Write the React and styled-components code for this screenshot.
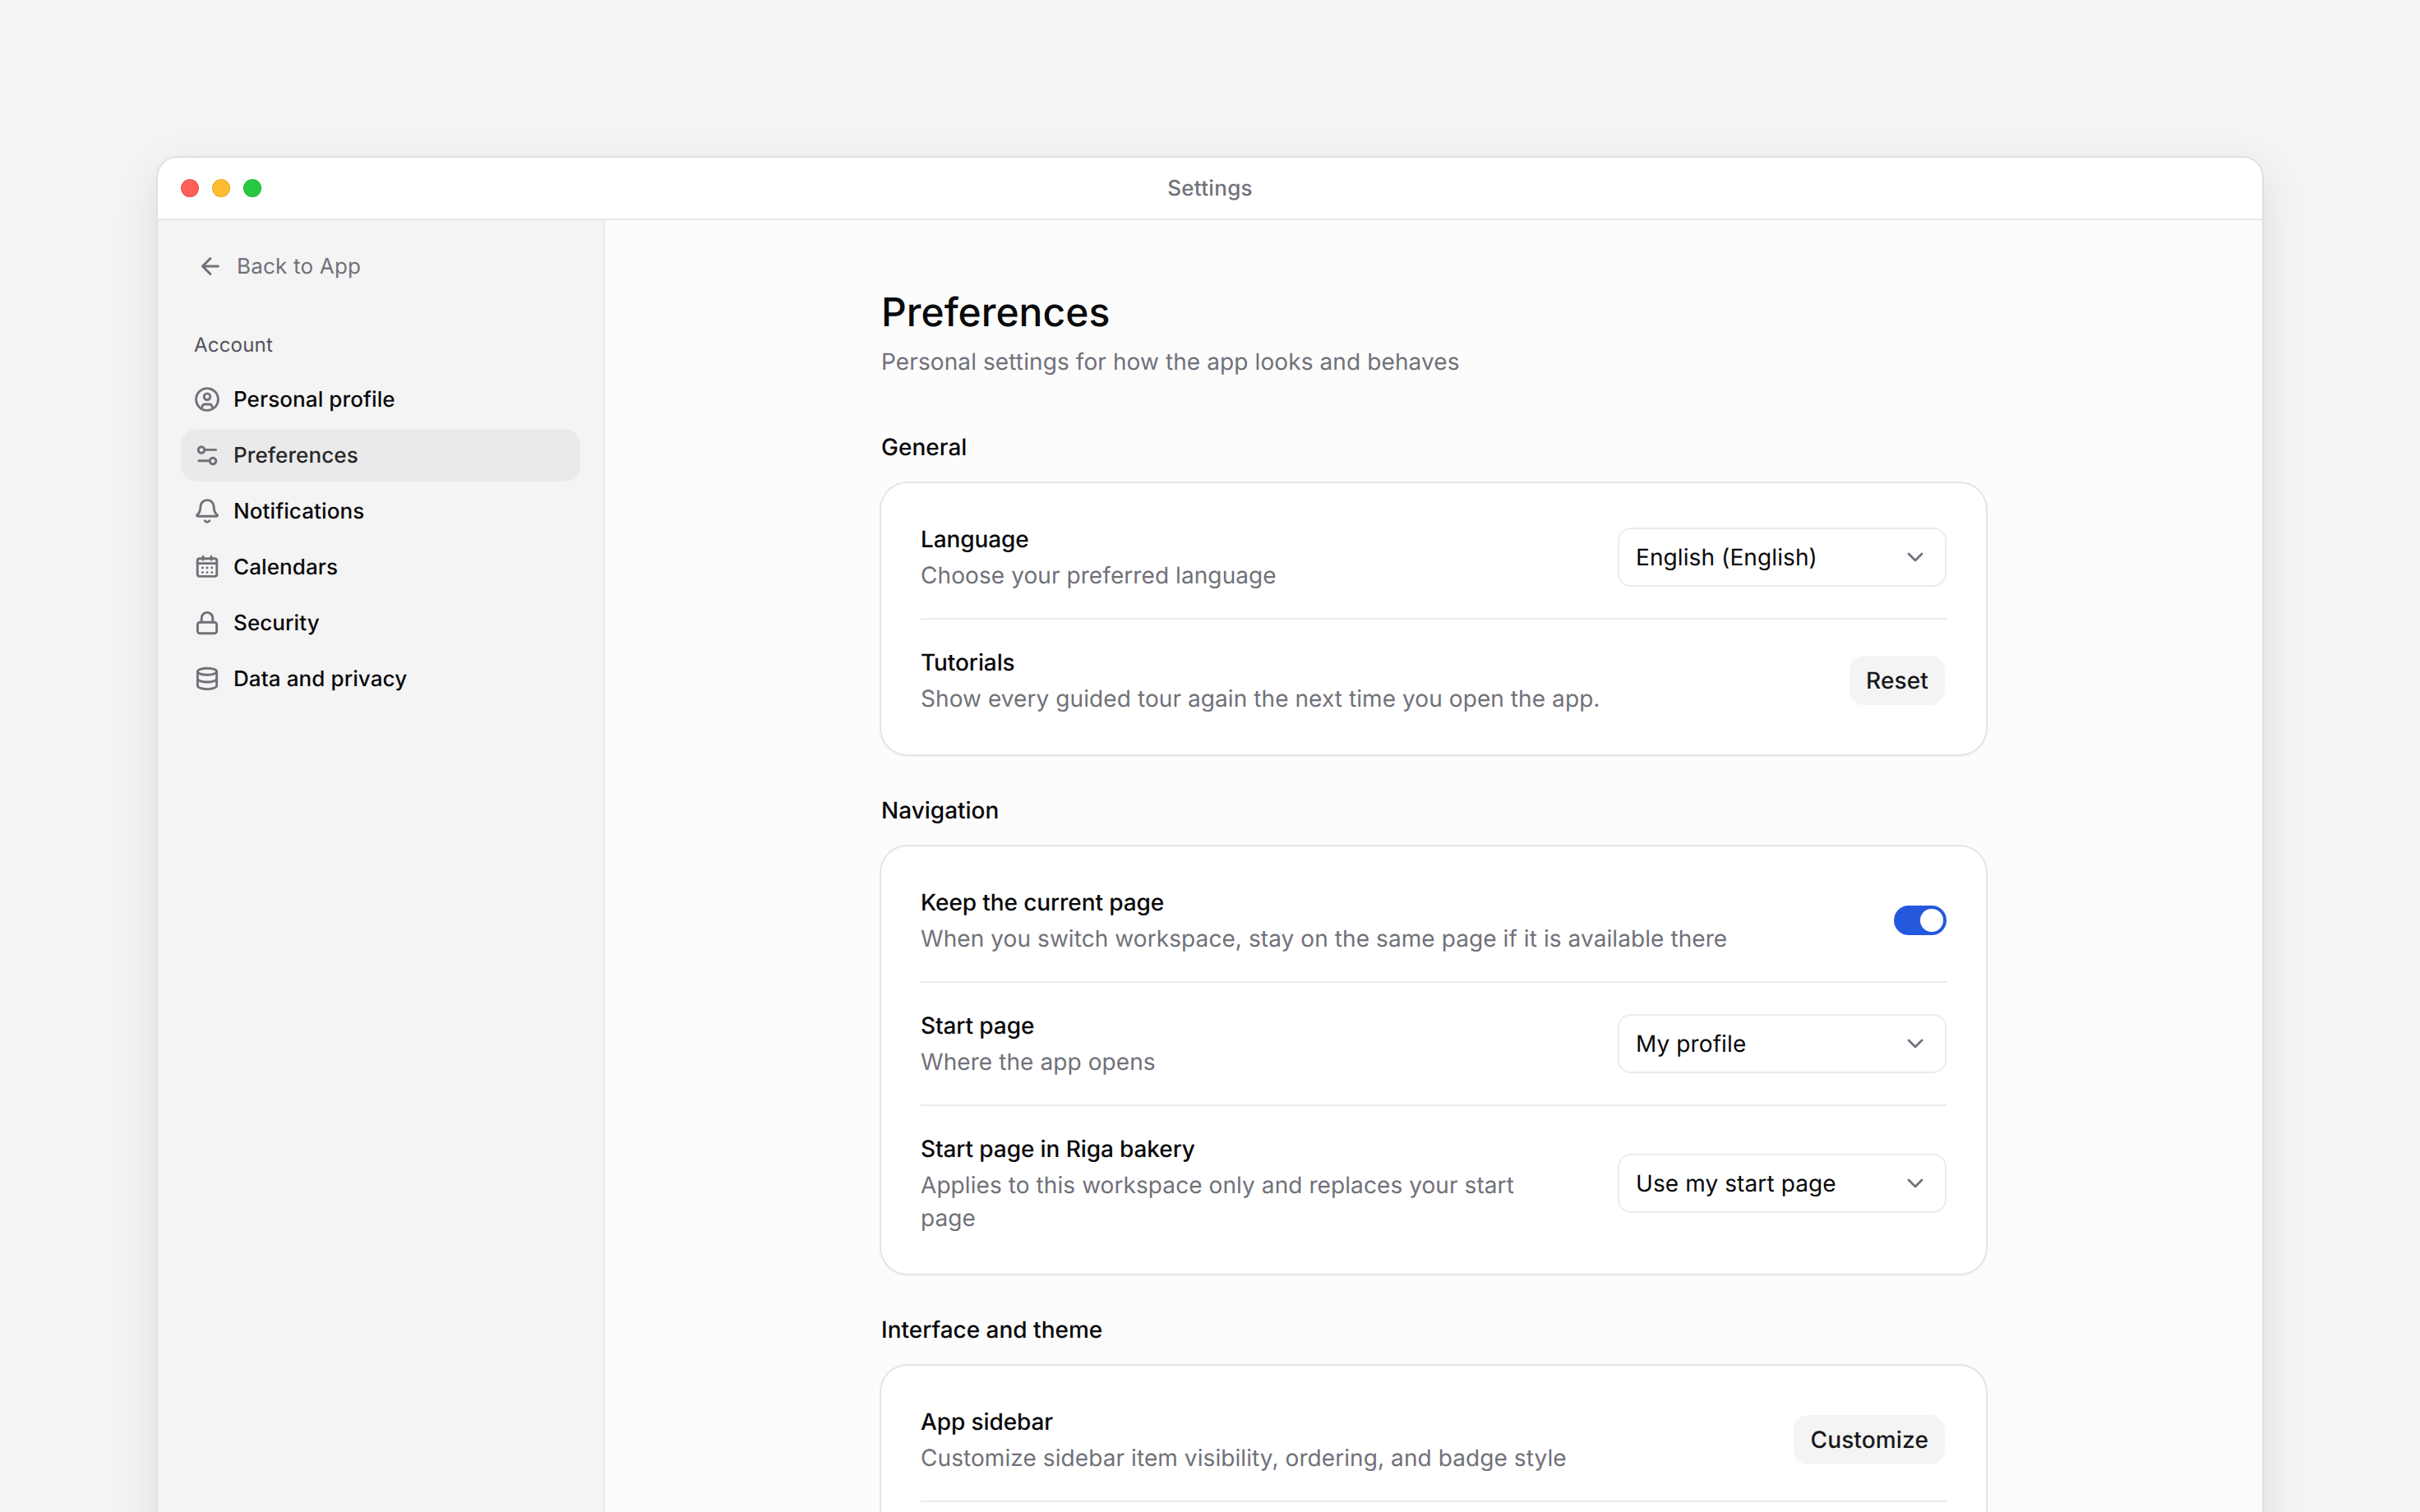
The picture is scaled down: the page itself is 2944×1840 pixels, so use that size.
import styled, { createGlobalStyle } from "styled-components";

const GlobalStyle = createGlobalStyle`
  * {
    box-sizing: border-box;
  }
  html,
  body {
    margin: 0;
    height: 100%;
    background: #f4f4f4;
  }
  body {
    font-family: Inter, "Noto Sans", sans-serif;
    text-rendering: geometricPrecision;
    color: #09090b;
  }
`;

const Page = styled.div`
  height: 1840px;
  padding: 192px 192px 0;
  overflow: hidden;
`;

const AppWindow = styled.div`
  width: 2560px;
  height: 1800px;
  display: flex;
  flex-direction: column;
  border-radius: 24px 24px 0 0;
  background: #fcfcfc;
  box-shadow: 0 0 0 2px #e0e0e0, 0 16px 56px rgba(0, 0, 0, 0.1);
`;

const TitleBar = styled.div`
  position: relative;
  height: 76px;
  flex: none;
  display: flex;
  align-items: center;
  justify-content: center;
  background: #fff;
  border-bottom: 2px solid #e9e9e9;
  border-radius: 24px 24px 0 0;
  font-size: 26px;
  font-weight: 450;
  letter-spacing: 0.3px;
  color: #71717a;
`;

const Lights = styled.div`
  position: absolute;
  left: 28px;
  top: 26px;
  display: flex;
  gap: 16px;
`;

const Light = styled.span`
  width: 22px;
  height: 22px;
  border-radius: 50%;
  background: ${(p) => p.$color};
  box-shadow: inset 0 0 0 1px rgba(0, 0, 0, 0.1);
`;

const Body = styled.div`
  flex: 1;
  display: flex;
  min-height: 0;
`;

const Sidebar = styled.aside`
  width: 544px;
  flex: none;
  padding: 26px 28px;
  background: #f4f4f4;
  border-right: 2px solid #e9e9e9;
`;

const BackLink = styled.div`
  height: 60px;
  display: flex;
  align-items: center;
  gap: 16px;
  padding-left: 20px;
  font-size: 26px;
  letter-spacing: 0.2px;
  color: #71717a;
`;

const GroupLabel = styled.div`
  margin: 46px 0 0;
  padding-left: 16px;
  height: 40px;
  line-height: 40px;
  font-size: 24px;
  letter-spacing: 0.2px;
  color: #52525b;
`;

const NavList = styled.div`
  display: flex;
  flex-direction: column;
  gap: 4px;
  margin-top: 14px;
`;

const NavItem = styled.div`
  height: 64px;
  display: flex;
  align-items: center;
  gap: 16px;
  padding-left: 16px;
  border-radius: 20px;
  font-size: 26px;
  font-weight: 450;
  letter-spacing: 0.1px;
  color: ${(p) => (p.$active ? "#27272a" : "#09090b")};
  background: ${(p) => (p.$active ? "#eaeaea" : "transparent")};
`;

const Icon = styled.svg`
  width: 32px;
  height: 32px;
  flex: none;
  fill: none;
  stroke: #71717a;
  stroke-width: 1.45;
  stroke-linecap: round;
  stroke-linejoin: round;
`;

const Main = styled.main`
  flex: 1;
  display: flex;
  justify-content: center;
  overflow: hidden;
`;

const Content = styled.div`
  width: 1344px;
  padding-top: 80px;
`;

const Title = styled.h1`
  margin: 0;
  line-height: 64px;
  font-size: 48px;
  font-weight: 450;
  color: #09090b;
`;

const Subtitle = styled.p`
  margin: 8px 0 0;
  line-height: 40px;
  font-size: 28px;
  letter-spacing: 0.1px;
  color: #71717a;
`;

const Section = styled.section`
  margin-top: 48px;
  &:first-of-type {
    margin-top: 64px;
  }
`;

const SectionTitle = styled.h2`
  margin: 0 0 24px;
  line-height: 40px;
  font-size: 28px;
  font-weight: 450;
  color: #09090b;
`;

const Card = styled.div`
  padding: 16px 48px;
  background: #fff;
  border-radius: 32px;
  box-shadow: 0 0 0 2px #e5e5e5, 0 2px 4px rgba(0, 0, 0, 0.06);
`;

const Row = styled.div`
  display: flex;
  align-items: center;
  justify-content: space-between;
  gap: 48px;
  padding: 32px 0;
  border-bottom: 2px solid #ececec;
  &:last-child {
    border-bottom: none;
  }
`;

const RowText = styled.div`
  display: flex;
  flex-direction: column;
  gap: 4px;
  max-width: ${(p) => (p.$narrow ? "760px" : "none")};
`;

const RowLabel = styled.div`
  line-height: 40px;
  font-size: 28px;
  font-weight: 450;
  letter-spacing: -0.1px;
  color: #09090b;
`;

const RowHint = styled.div`
  line-height: 40px;
  font-size: 28px;
  letter-spacing: 0.08px;
  color: #71717a;
`;

const Select = styled.div`
  width: 400px;
  height: 72px;
  flex: none;
  display: flex;
  align-items: center;
  justify-content: space-between;
  padding: 0 20px;
  background: #fff;
  border: 2px solid #ececec;
  border-radius: 16px;
  font-size: 28px;
  letter-spacing: 0.1px;
  color: #09090b;
`;

const Chevron = styled.svg`
  width: 32px;
  height: 32px;
  fill: none;
  stroke: #71717a;
  stroke-width: 1.4;
  stroke-linecap: round;
  stroke-linejoin: round;
`;

const Button = styled.div`
  height: 60px;
  flex: none;
  display: flex;
  align-items: center;
  margin-right: 2px;
  padding: 0 20px;
  background: #f4f4f4;
  border-radius: 18px;
  font-size: 28px;
  font-weight: 450;
  letter-spacing: 0.15px;
  color: #18181b;
`;

const Toggle = styled.div`
  width: 64px;
  height: 36px;
  flex: none;
  display: flex;
  align-items: center;
  justify-content: flex-end;
  padding: 0 4px;
  background: #2459dd;
  border-radius: 18px;
`;

const Knob = styled.span`
  width: 28px;
  height: 28px;
  border-radius: 50%;
  background: #fff;
`;

const ChevronDown = () => (
  <Chevron viewBox="0 0 16 16">
    <path d="M4 6l4 4 4-4" />
  </Chevron>
);

const icons = {
  back: (
    <Icon viewBox="0 0 16 16">
      <path d="M12.7 8H3.2M7.9 3.3 3.2 8l4.7 4.7" />
    </Icon>
  ),
  profile: (
    <Icon viewBox="0 0 16 16">
      <circle cx="8" cy="8" r="6.7" />
      <circle cx="8" cy="6.35" r="1.9" />
      <path d="M5 12.6v-.1c0-.8.6-1.5 1.4-1.5h3.2c.8 0 1.4.7 1.4 1.5v.1" />
    </Icon>
  ),
  prefs: (
    <Icon viewBox="0 0 16 16">
      <circle cx="4.5" cy="4.75" r="1.9" />
      <path d="M6.4 4.7h6.9M2.9 11.4h6.7" />
      <circle cx="11.5" cy="11.5" r="1.9" />
    </Icon>
  ),
  bell: (
    <Icon viewBox="0 0 16 16">
      <path d="M8 1.3c-2.4 0-4.1 1.9-4.1 4.3 0 2.6-.7 3.6-1.9 4.6-.4.3-.2.9.3.9h11.4c.5 0 .7-.6.3-.9-1.2-1-1.9-2-1.9-4.6 0-2.4-1.7-4.3-4.1-4.3Z" />
      <path d="M6.6 13.9c.5.5 1 .8 1.4.8s.9-.3 1.4-.8" />
    </Icon>
  ),
  calendar: (
    <Icon viewBox="0 0 16 16">
      <rect x="2.1" y="2.9" width="11.8" height="10.8" rx="1.3" />
      <path d="M2.1 5.8h11.8M5.5 1.6v2M10.5 1.6v2" />
      <path d="M5.2 8.5h.01M8 8.5h.01M10.9 8.5h.01M5.2 11.3h.01M8 11.3h.01M10.9 11.3h.01" />
    </Icon>
  ),
  lock: (
    <Icon viewBox="0 0 16 16">
      <rect x="2.2" y="7.6" width="11.6" height="6.8" rx="1.4" />
      <path d="M4.6 7.6V5.1a3.4 3.4 0 0 1 6.8 0v2.5" />
    </Icon>
  ),
  database: (
    <Icon viewBox="0 0 16 16">
      <ellipse cx="8" cy="3.6" rx="5.8" ry="2" />
      <path d="M2.2 3.6v8.7c0 1.1 2.6 2 5.8 2s5.8-.9 5.8-2V3.6" />
      <path d="M2.2 8c0 1.1 2.6 2 5.8 2s5.8-.9 5.8-2" />
    </Icon>
  ),
};

const navItems = [
  { icon: "profile", label: "Personal profile" },
  { icon: "prefs", label: "Preferences", active: true },
  { icon: "bell", label: "Notifications" },
  { icon: "calendar", label: "Calendars" },
  { icon: "lock", label: "Security" },
  { icon: "database", label: "Data and privacy" },
];

const SettingRow = ({ label, hint, narrow, children }) => (
  <Row>
    <RowText $narrow={narrow}>
      <RowLabel>{label}</RowLabel>
      <RowHint>{hint}</RowHint>
    </RowText>
    {children}
  </Row>
);

const SelectBox = ({ children }) => (
  <Select>
    {children}
    <ChevronDown />
  </Select>
);

export default function App() {
  return (
    <>
      <GlobalStyle />
      <Page>
        <AppWindow>
          <TitleBar>
            <Lights>
              <Light $color="#ff5f57" />
              <Light $color="#febc2e" />
              <Light $color="#28c840" />
            </Lights>
            Settings
          </TitleBar>
          <Body>
            <Sidebar>
              <BackLink>
                {icons.back}
                Back to App
              </BackLink>
              <GroupLabel>Account</GroupLabel>
              <NavList>
                {navItems.map((item) => (
                  <NavItem key={item.label} $active={item.active}>
                    {icons[item.icon]}
                    {item.label}
                  </NavItem>
                ))}
              </NavList>
            </Sidebar>
            <Main>
              <Content>
                <Title>Preferences</Title>
                <Subtitle>Personal settings for how the app looks and behaves</Subtitle>

                <Section>
                  <SectionTitle>General</SectionTitle>
                  <Card>
                    <SettingRow label="Language" hint="Choose your preferred language">
                      <SelectBox>English (English)</SelectBox>
                    </SettingRow>
                    <SettingRow
                      label="Tutorials"
                      hint="Show every guided tour again the next time you open the app."
                    >
                      <Button>Reset</Button>
                    </SettingRow>
                  </Card>
                </Section>

                <Section>
                  <SectionTitle>Navigation</SectionTitle>
                  <Card>
                    <SettingRow
                      label="Keep the current page"
                      hint="When you switch workspace, stay on the same page if it is available there"
                    >
                      <Toggle>
                        <Knob />
                      </Toggle>
                    </SettingRow>
                    <SettingRow label="Start page" hint="Where the app opens">
                      <SelectBox>My profile</SelectBox>
                    </SettingRow>
                    <SettingRow
                      narrow
                      label="Start page in Riga bakery"
                      hint="Applies to this workspace only and replaces your start page"
                    >
                      <SelectBox>Use my start page</SelectBox>
                    </SettingRow>
                  </Card>
                </Section>

                <Section>
                  <SectionTitle>Interface and theme</SectionTitle>
                  <Card>
                    <SettingRow
                      label="App sidebar"
                      hint="Customize sidebar item visibility, ordering, and badge style"
                    >
                      <Button>Customize</Button>
                    </SettingRow>
                    <Row />
                  </Card>
                </Section>
              </Content>
            </Main>
          </Body>
        </AppWindow>
      </Page>
    </>
  );
}
